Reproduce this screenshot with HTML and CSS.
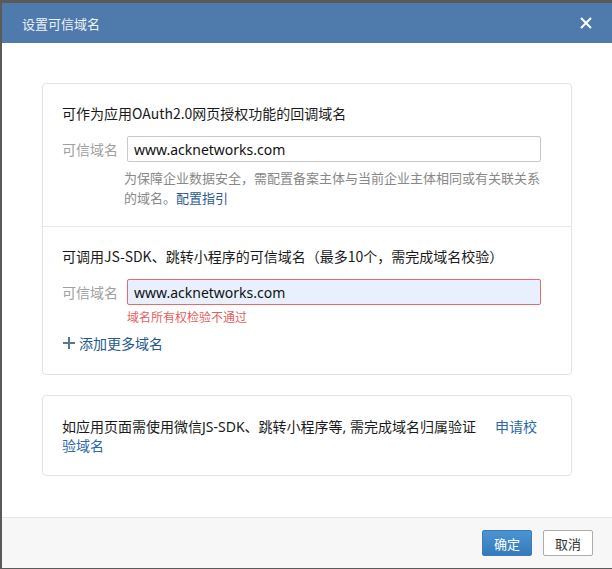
FILE: index.html
```html
<!DOCTYPE html>
<html lang="zh-CN">
<head>
  <meta charset="UTF-8" />
  <meta name="viewport" content="width=device-width, initial-scale=1.0" />
  <title>设置可信域名</title>
  <link rel="stylesheet" href="styles.css">
</head>
<body>
  <div class="dialog">
    <div class="dialog-header">
      <span class="dialog-title">设置可信域名</span>
      <button class="close-btn" aria-label="关闭">
        <svg width="12" height="12" viewBox="0 0 12 12">
          <path d="M1 1L11 11M11 1L1 11" stroke="#fff" stroke-width="2" fill="none" />
        </svg>
      </button>
    </div>

    <div class="dialog-body">
      <div class="card">
        <div class="section">
          <div class="section-title">可作为应用OAuth2.0网页授权功能的回调域名</div>
          <div class="field">
            <label class="field-label">可信域名</label>
            <input type="text" class="field-input" value="www.acknetworks.com" />
          </div>
          <div class="field-help">
            为保障企业数据安全，需配置备案主体与当前企业主体相同或有关联关系的域名。<a href="#" class="link">配置指引</a>
          </div>
        </div>

        <div class="section">
          <div class="section-title">可调用JS-SDK、跳转小程序的可信域名（最多10个，需完成域名校验）</div>
          <div class="field">
            <label class="field-label">可信域名</label>
            <input type="text" class="field-input is-error" value="www.acknetworks.com" />
          </div>
          <div class="field-error">域名所有权检验不通过</div>
          <a href="#" class="add-more">
            <svg width="12" height="12" viewBox="0 0 12 12">
              <path d="M6 0V12M0 6H12" stroke="#5b7690" stroke-width="2" fill="none" />
            </svg>
            添加更多域名
          </a>
        </div>
      </div>

      <div class="card">
        <div class="note">
          如应用页面需使用微信JS-SDK、跳转小程序等, 需完成域名归属验证<a href="#" class="link verify-link">申请校验域名</a>
        </div>
      </div>
    </div>

    <div class="dialog-footer">
      <button class="btn btn-primary">确定</button>
      <button class="btn">取消</button>
    </div>
  </div>
</body>
</html>
```

FILE: styles.css
```css
html, body {
  margin: 0;
  height: 100%;
  overflow: hidden;
}
body {
  background-color: #5a5a5a;
  font-family: "Noto Sans", "Noto Sans CJK SC", sans-serif;
  color: #222;
}
.dialog {
  margin: 3px 0 0 2px;
  width: 610px;
  height: 565px;
  background: #fff;
  display: flex;
  flex-direction: column;
}
.dialog-header {
  height: 40px;
  flex-shrink: 0;
  background-color: #4e7aac;
  display: flex;
  align-items: center;
  justify-content: space-between;
  padding: 0 20px 0 20px;
}
.dialog-title {
  color: #eef2f7;
  font-size: 13px;
  font-family: "Noto Sans CJK SC", sans-serif;
}
.close-btn {
  border: none;
  background: none;
  padding: 0;
  width: 12px;
  height: 12px;
  display: flex;
  cursor: pointer;
}
.dialog-body {
  flex: 1;
  padding: 40px 40px 0 40px;
  display: flex;
  flex-direction: column;
  gap: 20px;
}
.card {
  border: 1px solid #e3e3e3;
  border-radius: 4px;
}
.section {
  padding: 19px 19px 18px 19px;
  font-size: 14px;
  line-height: 20px;
}
.section + .section {
  border-top: 1px solid #e6e6e6;
  padding-top: 19px;
  padding-bottom: 20px;
}
.section-title {
  font-family: "Noto Sans CJK SC", sans-serif;
  color: #1a1a1a;
  margin-bottom: 13px;
}
.field {
  display: flex;
  align-items: center;
}
.field-label {
  width: 65px;
  flex-shrink: 0;
  color: #a0a0a0;
  font-family: "Noto Sans CJK SC", sans-serif;
}
.field-input {
  width: 414px;
  height: 26px;
  box-sizing: border-box;
  border: 1px solid #c8c8c8;
  border-radius: 2px;
  padding: 0 6px;
  font-family: "Noto Sans", "Noto Sans CJK SC", sans-serif;
  font-size: 14px;
  color: #111;
  outline: none;
}
.field-input.is-error {
  border-color: #e86a6a;
  background-color: #e8f0fe;
}
.field-help {
  margin: 6px 0 0 62px;
  width: 420px;
  font-size: 13px;
  line-height: 20px;
  color: #888;
  font-family: "Noto Sans CJK SC", sans-serif;
}
.link {
  color: #2a5c92;
  text-decoration: none;
}
.field-error {
  margin: 3px 0 0 65px;
  font-size: 12px;
  line-height: 18px;
  color: #e4605e;
  font-family: "Noto Sans CJK SC", sans-serif;
}
.add-more {
  display: inline-flex;
  align-items: center;
  gap: 4px;
  margin-top: 7px;
  margin-left: 1px;
  color: #25598c;
  text-decoration: none;
  font-family: "Noto Sans CJK SC", sans-serif;
}
.note {
  padding: 21px 26px 20px 19px;
  font-size: 14px;
  line-height: 19px;
  color: #1a1a1a;
}
.verify-link {
  margin-left: 19px;
  color: #2b6aa8;
  font-family: "Noto Sans CJK SC", sans-serif;
}
.dialog-footer {
  height: 51px;
  flex-shrink: 0;
  border-top: 1px solid #e5e5e5;
  background-color: #f7f7f7;
  display: flex;
  justify-content: flex-end;
  align-items: flex-start;
  gap: 11px;
  padding: 12px 19px 0 0;
  box-sizing: border-box;
}
.btn {
  width: 50px;
  height: 26px;
  border: 1px solid #adadad;
  border-radius: 2px;
  background: #fff;
  color: #333;
  font-size: 13px;
  font-family: "Noto Sans CJK SC", sans-serif;
  padding: 0;
  cursor: pointer;
}
.btn-primary {
  border-color: #3a7cbb;
  background: linear-gradient(#4b94d4, #357ab9);
  color: #fff;
}
```
